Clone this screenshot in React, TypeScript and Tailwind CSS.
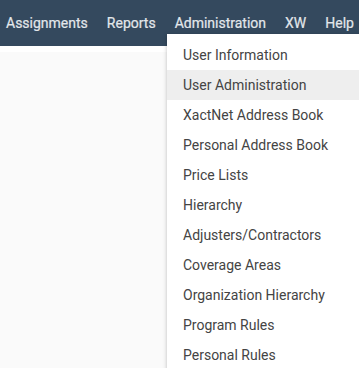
const navItems = ["Assignments", "Reports", "Administration", "XW", "Help"];

const adminItems = [
  "User Information",
  "User Administration",
  "XactNet Address Book",
  "Personal Address Book",
  "Price Lists",
  "Hierarchy",
  "Adjusters/Contractors",
  "Coverage Areas",
  "Organization Hierarchy",
  "Program Rules",
  "Personal Rules",
];

export default function App() {
  return (
    <div className="relative h-[368px] w-[359px] overflow-hidden bg-[#fafafa] font-['Roboto',sans-serif]">
      <nav className="flex h-[46px] items-center gap-[19px] bg-[#34495e] pl-[6px]">
        {navItems.map((item) => (
          <span key={item} className="whitespace-nowrap text-[14px] text-[#e3e7eb] [-webkit-text-stroke:0.2px_#e3e7eb]">
            {item}
          </span>
        ))}
      </nav>
      <div className="h-[6px] bg-white" />

      <ul className="absolute left-[167px] top-[34px] w-[210px] bg-white py-[6px] shadow-[0_1px_4px_rgba(0,0,0,0.25)]">
        {adminItems.map((item, i) => (
          <li
            key={item}
            className={`flex h-[30px] items-center pl-[16px] text-[14px] text-[#444444] ${
              i === 1 ? "bg-[#eeeeee]" : ""
            }`}
          >
            {item}
          </li>
        ))}
      </ul>
    </div>
  );
}
